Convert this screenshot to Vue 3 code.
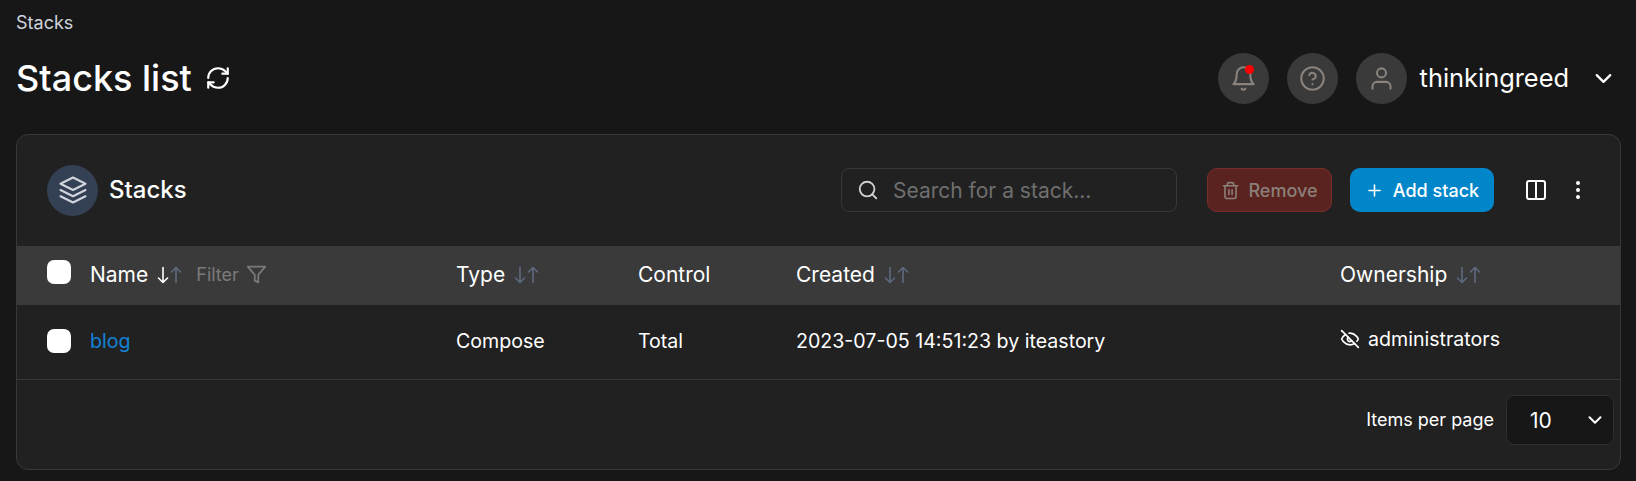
<script setup>
const sortCols = [
  { label: 'Type', sort: true },
  { label: 'Control', sort: false },
  { label: 'Created', sort: true },
  { label: 'Ownership', sort: true }
]
</script>

<template>
  <div class="page">
    <div class="crumb">Stacks</div>
    <header class="topbar">
      <div class="title-wrap">
        <h1 class="title">Stacks list</h1>
        <svg class="refresh" viewBox="0 0 24 24" fill="none" stroke="currentColor" stroke-width="2" stroke-linecap="round" stroke-linejoin="round">
          <path d="M3 12a9 9 0 0 1 9-9 9.75 9.75 0 0 1 6.74 2.74L21 8" />
          <path d="M21 3v5h-5" />
          <path d="M21 12a9 9 0 0 1-9 9 9.75 9.75 0 0 1-6.74-2.74L3 16" />
          <path d="M8 16H3v5" />
        </svg>
      </div>
      <div class="user-area">
        <button class="round bell-btn">
          <svg viewBox="0 0 24 24" fill="none" stroke="currentColor" stroke-linecap="round" stroke-linejoin="round">
            <path d="M18 8a6 6 0 0 0-12 0c0 7-3 9-3 9h18s-3-2-3-9" />
            <path d="M13.7 21a2 2 0 0 1-3.4 0" />
          </svg>
          <span class="dot"></span>
        </button>
        <button class="round">
          <svg viewBox="0 0 24 24" fill="none" stroke="currentColor" stroke-linecap="round" stroke-linejoin="round">
            <circle cx="12" cy="12" r="10" />
            <path d="M9.09 9a3 3 0 0 1 5.83 1c0 2-3 3-3 3" />
            <path d="M12 17h.01" />
          </svg>
        </button>
        <button class="round">
          <svg viewBox="0 0 24 24" fill="none" stroke="currentColor" stroke-linecap="round" stroke-linejoin="round">
            <path d="M20 21v-2a4 4 0 0 0-4-4H8a4 4 0 0 0-4 4v2" />
            <circle cx="12" cy="7" r="4" />
          </svg>
        </button>
        <span class="username">thinkingreed</span>
        <svg class="chev" viewBox="0 0 24 24" fill="none" stroke="currentColor" stroke-width="2" stroke-linecap="round" stroke-linejoin="round">
          <path d="m6 9 6 6 6-6" />
        </svg>
      </div>
    </header>

    <section class="card">
      <div class="card-head">
        <div class="head-left">
          <span class="badge">
            <svg viewBox="0 0 24 24" fill="none" stroke="currentColor" stroke-width="1.7" stroke-linecap="round" stroke-linejoin="round">
              <path d="M12 2 2 7l10 5 10-5-10-5Z" />
              <path d="m2 17 10 5 10-5" />
              <path d="m2 12 10 5 10-5" />
            </svg>
          </span>
          <h2 class="card-title">Stacks</h2>
        </div>
        <div class="head-right">
          <label class="search">
            <svg viewBox="0 0 24 24" fill="none" stroke="currentColor" stroke-width="2" stroke-linecap="round" stroke-linejoin="round">
              <circle cx="11" cy="11" r="8" />
              <path d="m21 21-4.3-4.3" />
            </svg>
            <input placeholder="Search for a stack..." />
          </label>
          <button class="btn remove">
            <svg viewBox="0 0 24 24" fill="none" stroke="currentColor" stroke-width="2" stroke-linecap="round" stroke-linejoin="round">
              <path d="M3 6h18" />
              <path d="M19 6v14a2 2 0 0 1-2 2H7a2 2 0 0 1-2-2V6" />
              <path d="M8 6V4a2 2 0 0 1 2-2h4a2 2 0 0 1 2 2v2" />
              <path d="M10 11v6" />
              <path d="M14 11v6" />
            </svg>
            Remove
          </button>
          <button class="btn add">
            <svg viewBox="0 0 24 24" fill="none" stroke="currentColor" stroke-width="2" stroke-linecap="round" stroke-linejoin="round">
              <path d="M5 12h14" />
              <path d="M12 5v14" />
            </svg>
            Add stack
          </button>
          <svg class="columns" viewBox="0 0 24 24" fill="none" stroke="currentColor" stroke-width="2" stroke-linecap="round" stroke-linejoin="round">
            <rect x="3" y="3" width="18" height="18" rx="2" />
            <path d="M12 3v18" />
          </svg>
          <svg class="more" viewBox="0 0 24 24" fill="currentColor" stroke="currentColor" stroke-width="2">
            <circle cx="12" cy="5" r="1" />
            <circle cx="12" cy="12" r="1" />
            <circle cx="12" cy="19" r="1" />
          </svg>
        </div>
      </div>

      <div class="row thead">
        <div class="cell first">
          <span class="check"></span>
          <span class="th-name">Name</span>
          <span class="sort">
            <svg viewBox="0 0 12 18" class="a active" fill="none" stroke="currentColor" stroke-width="1.6" stroke-linecap="round" stroke-linejoin="round"><path d="M6 1.5v15M1.5 12 6 16.5 10.5 12" /></svg>
            <svg viewBox="0 0 12 18" class="a" fill="none" stroke="currentColor" stroke-width="1.6" stroke-linecap="round" stroke-linejoin="round"><path d="M6 16.5v-15M1.5 6 6 1.5 10.5 6" /></svg>
          </span>
          <span class="filter">Filter</span>
          <svg class="funnel" viewBox="0 0 24 24" fill="none" stroke="currentColor" stroke-width="2" stroke-linecap="round" stroke-linejoin="round">
            <path d="M22 3H2l8 9.46V19l4 2v-8.54L22 3z" />
          </svg>
        </div>
        <div v-for="c in sortCols" :key="c.label" class="cell">
          <span>{{ c.label }}</span>
          <span v-if="c.sort" class="sort">
            <svg viewBox="0 0 12 18" class="a" fill="none" stroke="currentColor" stroke-width="1.6" stroke-linecap="round" stroke-linejoin="round"><path d="M6 1.5v15M1.5 12 6 16.5 10.5 12" /></svg>
            <svg viewBox="0 0 12 18" class="a" fill="none" stroke="currentColor" stroke-width="1.6" stroke-linecap="round" stroke-linejoin="round"><path d="M6 16.5v-15M1.5 6 6 1.5 10.5 6" /></svg>
          </span>
        </div>
      </div>

      <div class="row tbody">
        <div class="cell first">
          <span class="check"></span>
          <a class="link">blog</a>
        </div>
        <div class="cell">Compose</div>
        <div class="cell">Total</div>
        <div class="cell">2023-07-05 14:51:23 by iteastory</div>
        <div class="cell owner">
          <svg viewBox="0 0 24 24" fill="none" stroke="currentColor" stroke-width="2" stroke-linecap="round" stroke-linejoin="round">
            <path d="M9.88 9.88a3 3 0 1 0 4.24 4.24" />
            <path d="M10.73 5.08A10.43 10.43 0 0 1 12 5c7 0 10 7 10 7a13.16 13.16 0 0 1-1.67 2.68" />
            <path d="M6.61 6.61A13.53 13.53 0 0 0 2 12s3 7 10 7a9.74 9.74 0 0 0 5.39-1.61" />
            <path d="m2 2 20 20" />
          </svg>
          administrators
        </div>
      </div>

      <div class="foot">
        <span class="per">Items per page</span>
        <div class="select">
          <span>10</span>
          <svg viewBox="0 0 24 24" fill="none" stroke="currentColor" stroke-width="2.2" stroke-linecap="round" stroke-linejoin="round">
            <path d="m6 9 6 6 6-6" />
          </svg>
        </div>
      </div>
    </section>
  </div>
</template>

<style>
html, body { background: #171717; margin: 0; }
</style>

<style scoped>
* { box-sizing: border-box; }
.page {
  font-family: Inter, "Liberation Sans", sans-serif;
  color: #fff;
  padding: 0 15px 0 16px;
  height: 481px;
  overflow: hidden;
}
.crumb {
  font-size: 18px;
  line-height: 20px;
  padding-top: 13px;
  height: 33px;
  color: #d0d5dd;
}
.topbar {
  display: flex;
  align-items: center;
  justify-content: space-between;
  height: 101px;
  padding-top: 7px;
  padding-bottom: 18px;
}
.title-wrap { display: flex; align-items: center; gap: 13px; }
.title { margin: 0; font-size: 36px; line-height: 44px; font-weight: 500; }
.refresh { width: 26px; height: 26px; }
.user-area { display: flex; align-items: center; gap: 18px; padding-right: 4px; }
.round {
  width: 51px;
  height: 51px;
  border-radius: 50%;
  background: #3a3a3a;
  border: 0;
  padding: 0;
  color: #8a827c;
  display: flex;
  align-items: center;
  justify-content: center;
  position: relative;
}
.round svg { width: 27px; height: 27px; stroke-width: 1.8; }
.dot {
  position: absolute;
  top: 12px;
  left: 27px;
  width: 9px;
  height: 9px;
  border-radius: 50%;
  background: #f00;
}
.username { font-size: 25.4px; line-height: 30px; font-weight: 400; margin-left: -5px; }
.chev { width: 27px; height: 27px; margin-left: 3px; }
.card {
  background: #212121;
  border: 1px solid #383838;
  border-radius: 12px;
  height: 336px;
  overflow: hidden;
}
.card-head {
  height: 111px;
  display: flex;
  align-items: center;
  justify-content: space-between;
  padding: 0 30px 1px 30px;
}
.head-left { display: flex; align-items: center; gap: 11px; }
.badge {
  width: 51px;
  height: 51px;
  border-radius: 50%;
  background: #344054;
  color: #d0d5dd;
  display: flex;
  align-items: center;
  justify-content: center;
}
.badge svg { width: 30px; height: 30px; }
.card-title { margin: 0 0 1px; font-size: 24px; line-height: 30px; font-weight: 500; }
.head-right { display: flex; align-items: center; }
.search {
  width: 336px;
  height: 44px;
  border: 1px solid #383838;
  border-radius: 8px;
  display: flex;
  align-items: center;
  gap: 14px;
  padding-left: 15px;
  color: #d0d0d0;
  margin-right: 30px;
}
.search svg { width: 22px; height: 22px; flex: none; }
.search input {
  flex: 1;
  min-width: 0;
  background: transparent;
  border: 0;
  outline: 0;
  padding: 0;
  font: 400 21px Inter, sans-serif;
  color: #fff;
}
.search input::placeholder { color: #6f6f6f; opacity: 1; }
.btn {
  height: 44px;
  border-radius: 10px;
  font: 500 18px Inter, sans-serif;
  display: flex;
  align-items: center;
  justify-content: center;
  gap: 8px;
  padding: 0;
}
.btn svg { width: 19px; height: 19px; flex: none; }
.remove {
  width: 125px;
  background: #5b2320;
  border: 1px solid #7a2e29;
  color: #8b8079;
  margin-right: 18px;
}
.add {
  width: 144px;
  background: #0086c9;
  border: 0;
  color: #fff;
  gap: 9px;
  margin-right: 30px;
}
.columns { width: 24px; height: 24px; }
.more { width: 24px; height: 24px; margin-left: 18px; }
.row {
  display: grid;
  grid-template-columns: 439px 182px 158px 544px 1fr;
  align-items: center;
}
.thead { height: 59px; background: #3a3a3a; font-size: 21px; font-weight: 400; }
.tbody { height: 75px; border-bottom: 1px solid #383838; font-size: 19.6px; font-weight: 400; }
.cell { display: flex; align-items: center; white-space: nowrap; margin-top: -2px; }
.first { padding-left: 30px; }
.check {
  width: 24px;
  height: 24px;
  border-radius: 7px;
  background: #fff;
  margin-right: 19px;
  flex: none;
}
.thead .check { margin-bottom: 5px; }
.link { color: #1282d6; font-size: 19.6px; font-weight: 400; }
.sort { display: inline-flex; align-items: center; margin-left: 9px; color: #5e6a7f; gap: 1px; }
.a { width: 12px; height: 18px; }
.a.active { color: #fff; }
.filter { font-size: 18px; font-weight: 400; color: #7a7a7a; margin-left: 14px; }
.funnel { width: 21px; height: 21px; color: #7a7a7a; margin-left: 7px; }
.owner { gap: 8px; margin-top: -6px; }
.owner svg { width: 20px; height: 20px; }
.foot {
  height: 89px;
  display: flex;
  align-items: center;
  justify-content: flex-end;
  padding-right: 6px;
  padding-bottom: 9px;
}
.per { font-size: 18px; font-weight: 400; margin-right: 12px; margin-bottom: 2px; }
.select {
  width: 108px;
  height: 50px;
  background: #171717;
  border: 1px solid #303030;
  border-radius: 8px;
  display: flex;
  align-items: center;
  justify-content: space-between;
  padding: 0 7px 0 23px;
  font-size: 21px;
  font-weight: 400;
}
.select svg { width: 22px; height: 22px; }
</style>
